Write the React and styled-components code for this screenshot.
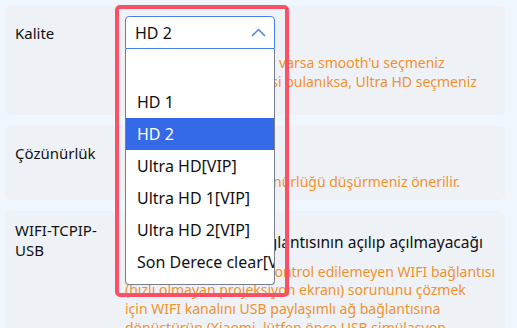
import React from 'react'
import styled, { createGlobalStyle } from 'styled-components'

const GlobalStyle = createGlobalStyle`
  html, body {
    margin: 0;
    padding: 0;
    background: #f0f6fe;
  }
  body {
    font-family: "Noto Sans", "Open Sans", sans-serif;
    color: #1a1a1a;
  }
`

const Page = styled.div`
  position: relative;
  width: 517px;
  height: 328px;
  overflow: hidden;
  box-sizing: border-box;
  padding: 6px 12px 0 5px;
  display: flex;
  flex-direction: column;
  gap: 11px;
`

const Card = styled.div`
  display: grid;
  grid-template-columns: 110px 1fr;
  align-items: center;
  background: #eef1f5;
  border-radius: 6px;
  padding: ${(p) => p.$pt}px 10px ${(p) => p.$pb}px 10px;
  flex-shrink: 0;
`

const Label = styled.div`
  font-size: 15px;
  line-height: 20px;
  width: 100px;
  color: #111;
`

const Control = styled.div`
  height: 33px;
`

const Toggle = styled.label`
  display: flex;
  align-items: center;
  gap: 10px;
  font-size: 15.5px;
  line-height: 20px;
  padding-top: 4px;
  color: #111;
  white-space: nowrap;
`

const Check = styled.span`
  width: 14px;
  height: 14px;
  box-sizing: border-box;
  border: 1px solid #888;
  border-radius: 2px;
  background: #fff;
  flex-shrink: 0;
`

const Note = styled.div`
  grid-column: 2;
  margin-top: ${(p) => p.$mt}px;
  font-size: 14px;
  line-height: 18.6px;
  color: #f0922e;
  white-space: nowrap;
`

const SelectBox = styled.div`
  width: 150px;
  height: 33px;
  box-sizing: border-box;
  border: 1px solid #4a7ff0;
  border-radius: 4px 4px 0 0;
  background: #fff;
  display: flex;
  align-items: center;
  justify-content: space-between;
  padding: 0 8px 0 9px;
  font-size: 16px;
  color: #111;
`

const DropList = styled.ul`
  position: absolute;
  left: 125px;
  top: 49px;
  width: 150px;
  height: 236px;
  box-sizing: border-box;
  margin: 0;
  padding: 0;
  list-style: none;
  background: #fff;
  border: 1px solid #7b7d8a;
  border-top: none;
  border-radius: 0 0 4px 4px;
  overflow: hidden;
`

const Option = styled.li`
  height: ${(p) => (p.$empty ? 37 : 32)}px;
  line-height: 32px;
  padding-left: 11px;
  font-size: 16px;
  white-space: nowrap;
  color: ${(p) => (p.$active ? '#fff' : '#111')};
  background: ${(p) => (p.$active ? '#3469e8' : 'transparent')};
`

const Highlight = styled.div`
  position: absolute;
  left: 115px;
  top: 5px;
  width: 174px;
  height: 292px;
  box-sizing: border-box;
  border: 4px solid #fa5166;
  border-radius: 5px;
  pointer-events: none;
`

const Chevron = () => (
  <svg width="15" height="9" viewBox="0 0 15 9" fill="none">
    <path d="M1 8 L7.5 1.5 L14 8" stroke="#4a7ff0" strokeWidth="1.5" />
  </svg>
)

const options = ['', 'HD 1', 'HD 2', 'Ultra HD[VIP]', 'Ultra HD 1[VIP]', 'Ultra HD 2[VIP]', 'Son Derece clear[VIP]']

export default function App() {
  return (
    <>
      <GlobalStyle />
      <Page>
        <Card $pt={10} $pb={24}>
          <Label>Kalite</Label>
          <SelectBox>
            <span>HD 2</span>
            <Chevron />
          </SelectBox>
          <Note $mt={5}>
            Görüntüde çok takılma varsa smooth'u seçmeniz
            <br />
            Ekranın görüntü kalitesi bulanıksa, Ultra HD seçmeniz
          </Note>
        </Card>

        <Card $pt={10} $pb={8}>
          <Label>Çözünürlük</Label>
          <Control />
          <Note $mt={4}>Donma yaşanırsa çözünürlüğü düşürmeniz önerilir.</Note>
        </Card>

        <Card $pt={9} $pb={8}>
          <Label>WIFI-TCPIP-USB</Label>
          <Toggle>
            <Check />
            Uzaktan WIFI bağlantısının açılıp açılmayacağı
          </Toggle>
          <Note $mt={3}>
            Uzaktan kumanda ile kontrol edilemeyen WIFI bağlantısı
            <br />
            (hızlı olmayan projeksiyon ekranı) sorununu çözmek
            <br />
            için WIFI kanalını USB paylaşımlı ağ bağlantısına
            <br />
            dönüştürün (Xiaomi, lütfen önce USB simülasyon
          </Note>
        </Card>

        <DropList>
          {options.map((o, i) => (
            <Option key={i} $empty={o === ''} $active={o === 'HD 2'}>
              {o}
            </Option>
          ))}
        </DropList>
        <Highlight />
      </Page>
    </>
  )
}
